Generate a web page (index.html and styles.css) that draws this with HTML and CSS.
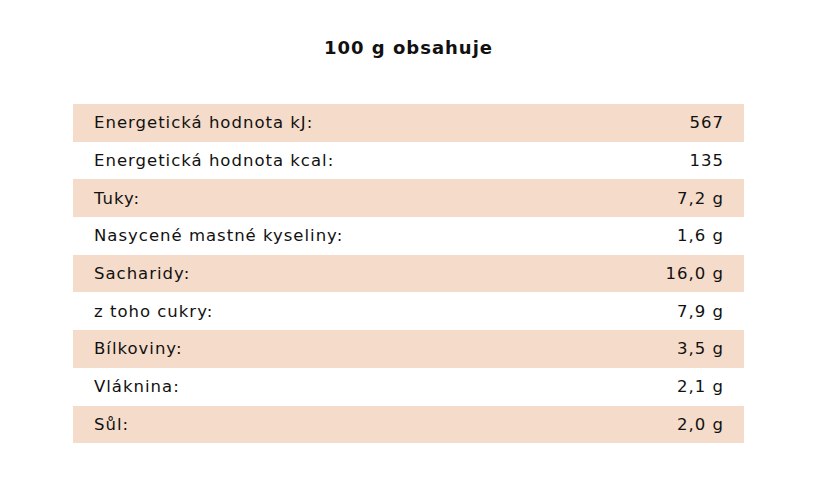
FILE: index.html
```html
<!DOCTYPE html>
<html lang="cs">
<head>
<meta charset="utf-8">
<link rel="stylesheet" href="styles.css">
</head>
<body>
<div class="wrap">
  <h2 class="title">100 g obsahuje</h2>
  <table class="nutri">
    <tr class="odd"><td>Energetická hodnota kJ:</td><td class="val">567</td></tr>
    <tr><td>Energetická hodnota kcal:</td><td class="val">135</td></tr>
    <tr class="odd"><td>Tuky:</td><td class="val">7,2 g</td></tr>
    <tr><td>Nasycené mastné kyseliny:</td><td class="val">1,6 g</td></tr>
    <tr class="odd"><td>Sacharidy:</td><td class="val">16,0 g</td></tr>
    <tr><td>z toho cukry:</td><td class="val">7,9 g</td></tr>
    <tr class="odd"><td>Bílkoviny:</td><td class="val">3,5 g</td></tr>
    <tr><td>Vláknina:</td><td class="val">2,1 g</td></tr>
    <tr class="odd"><td>Sůl:</td><td class="val">2,0 g</td></tr>
  </table>
</div>
</body>
</html>
```
FILE: styles.css
```css
html, body {
  margin: 0;
  padding: 0;
  background: #ffffff;
}
body {
  font-family: "DejaVu Sans", Verdana, sans-serif;
  color: #111111;
}
.wrap {
  padding: 35px 82px 0 73px;
}
.title {
  margin: 0 0 43px;
  text-align: center;
  font-size: 18px;
  letter-spacing: 1px;
  font-weight: bold;
  line-height: 26px;
}
.nutri {
  width: 100%;
  border-collapse: collapse;
  font-size: 16.5px;
  letter-spacing: 1px;
}
.nutri td {
  height: 37.7px;
  padding: 0 21px;
  box-sizing: border-box;
  vertical-align: middle;
}
.nutri tr.odd td {
  background: #f5dbc9;
}
.nutri td.val {
  text-align: right;
  padding-right: 20px;
}
```
